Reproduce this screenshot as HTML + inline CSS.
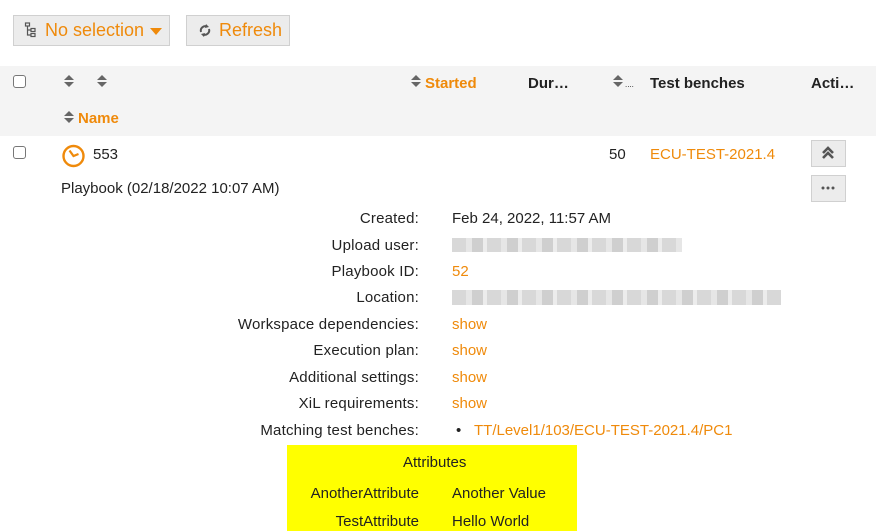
<!DOCTYPE html>
<html><head><meta charset="utf-8"><style>
*{margin:0;padding:0;box-sizing:border-box}
body{width:876px;height:531px;overflow:hidden;background:#fff;font-family:"Liberation Sans",Arial,sans-serif;font-size:15px;color:#222;position:relative}
.a{position:absolute;white-space:nowrap}
.o{color:#ef8a0b}
.btn{position:absolute;background:#ececec;border:1px solid #d0d0d0}
.hdr{position:absolute;left:0;top:66px;width:876px;height:70px;background:#f4f4f4}
.cb{position:absolute;width:13px;height:13px;border:1px solid #777;border-radius:3px;background:#fff}
.s{position:absolute;width:0;height:0;border-left:5px solid transparent;border-right:5px solid transparent}
.up{border-bottom:5px solid #666}.dn{border-top:5px solid #666}
.lbl{position:absolute;right:457px;white-space:nowrap;color:#222;letter-spacing:0.2px}
.val{position:absolute;left:452px;white-space:nowrap}
.blur{position:absolute;background:repeating-linear-gradient(90deg,#d8d8d8 0 14px,#e6e6e6 14px 20px,#cfcfcf 20px 31px,#ececec 31px 35px)}
b{font-weight:bold}
</style></head><body>
<div class="btn" style="left:13px;top:15px;width:157px;height:31px"></div>
<svg class="a" style="left:24px;top:22px" width="14" height="16" viewBox="0 0 14 16"><g fill="none" stroke="#555" stroke-width="1.2"><rect x="1.5" y="1" width="4" height="3"/><rect x="7" y="6.5" width="4" height="3"/><rect x="7" y="11.5" width="4" height="3"/><path d="M3.5 4v9h3.5M3.5 8h3.5"/></g></svg>
<div class="a o" style="left:45px;top:20px;font-size:18px">No selection</div>
<div class="s" style="left:150px;top:28px;border-left-width:6px;border-right-width:6px;border-top:7px solid #ef8a0b"></div>
<div class="btn" style="left:186px;top:15px;width:104px;height:31px"></div>
<svg class="a" style="left:198px;top:23px" width="14" height="15" viewBox="0 0 14 15"><g fill="none" stroke="#555" stroke-width="2"><path d="M3 9A4.5 4.5 0 0 1 9 3.5M11 6A4.5 4.5 0 0 1 5 11.5"/></g><path d="M8 1l3 3-4 1z M6 14l-3-3 4-1z" fill="#555"/></svg>
<div class="a o" style="left:219px;top:20px;font-size:18px">Refresh</div>

<div class="hdr"></div>
<div class="cb" style="left:13px;top:75px"></div>
<div class="s up" style="left:64px;top:75px"></div><div class="s dn" style="left:64px;top:82px"></div>
<div class="s up" style="left:97px;top:75px"></div><div class="s dn" style="left:97px;top:82px"></div>
<div class="s up" style="left:64px;top:111px"></div><div class="s dn" style="left:64px;top:118px"></div>
<div class="a o" style="left:78px;top:110px"><b>Name</b></div>
<div class="s up" style="left:411px;top:75px"></div><div class="s dn" style="left:411px;top:82px"></div>
<div class="a o" style="left:425px;top:75px"><b>Started</b></div>
<div class="a" style="left:528px;top:75px"><b>Dur…</b></div>
<div class="s up" style="left:613px;top:75px"></div><div class="s dn" style="left:613px;top:82px"></div>
<div class="a" style="left:625px;top:80px;font-size:8px">....</div>
<div class="a" style="left:650px;top:75px"><b>Test benches</b></div>
<div class="a" style="left:811px;top:75px"><b>Acti…</b></div>

<div class="cb" style="left:13px;top:146px"></div>
<svg class="a" style="left:61px;top:143px" width="25" height="25" viewBox="0 0 25 25"><circle cx="12.5" cy="13" r="10" fill="none" stroke="#ef8a0b" stroke-width="2.4"/><path d="M8.5 7.5l4 5.5 5-2" fill="none" stroke="#ef8a0b" stroke-width="2.2"/></svg>
<div class="a" style="left:93px;top:146px">553</div>
<div class="a" style="left:609px;top:146px">50</div>
<div class="a o" style="left:650px;top:146px">ECU-TEST-2021.4</div>
<div class="btn" style="left:811px;top:140px;width:35px;height:27px"></div>
<svg class="a" style="left:821px;top:145px" width="14" height="15" viewBox="0 0 14 15"><path d="M2 8l5-5 5 5M2 13l5-5 5 5" fill="none" stroke="#555" stroke-width="2.6"/></svg>
<div class="btn" style="left:811px;top:175px;width:35px;height:27px"></div>
<svg class="a" style="left:821px;top:186px" width="14" height="4"><circle cx="2" cy="2" r="1.5" fill="#555"/><circle cx="7" cy="2" r="1.5" fill="#555"/><circle cx="12" cy="2" r="1.5" fill="#555"/></svg>
<div class="a" style="left:61px;top:180px">Playbook (02/18/2022 10:07 AM)</div>

<div class="lbl" style="top:210px">Created:</div><div class="val" style="top:210px">Feb 24, 2022, 11:57 AM</div>
<div class="lbl" style="top:237px">Upload user:</div><div class="blur" style="left:452px;top:238px;width:230px;height:14px"></div>
<div class="lbl" style="top:263px">Playbook ID:</div><div class="val o" style="top:263px">52</div>
<div class="lbl" style="top:289px">Location:</div><div class="blur" style="left:452px;top:290px;width:329px;height:15px"></div>
<div class="lbl" style="top:316px">Workspace dependencies:</div><div class="val o" style="top:316px">show</div>
<div class="lbl" style="top:342px">Execution plan:</div><div class="val o" style="top:342px">show</div>
<div class="lbl" style="top:369px">Additional settings:</div><div class="val o" style="top:369px">show</div>
<div class="lbl" style="top:395px">XiL requirements:</div><div class="val o" style="top:395px">show</div>
<div class="lbl" style="top:422px">Matching test benches:</div>
<div class="a" style="left:456px;top:422px">•</div><div class="a o" style="left:474px;top:422px">TT/Level1/103/ECU-TEST-2021.4/PC1</div>

<div class="a" style="left:287px;top:445px;width:290px;height:86px;background:#ffff00"></div>
<div class="a" style="left:403px;top:454px">Attributes</div>
<div class="a" style="right:457px;top:485px">AnotherAttribute</div><div class="a" style="left:452px;top:485px">Another Value</div>
<div class="a" style="right:457px;top:513px">TestAttribute</div><div class="a" style="left:452px;top:513px">Hello World</div>
</body></html>
